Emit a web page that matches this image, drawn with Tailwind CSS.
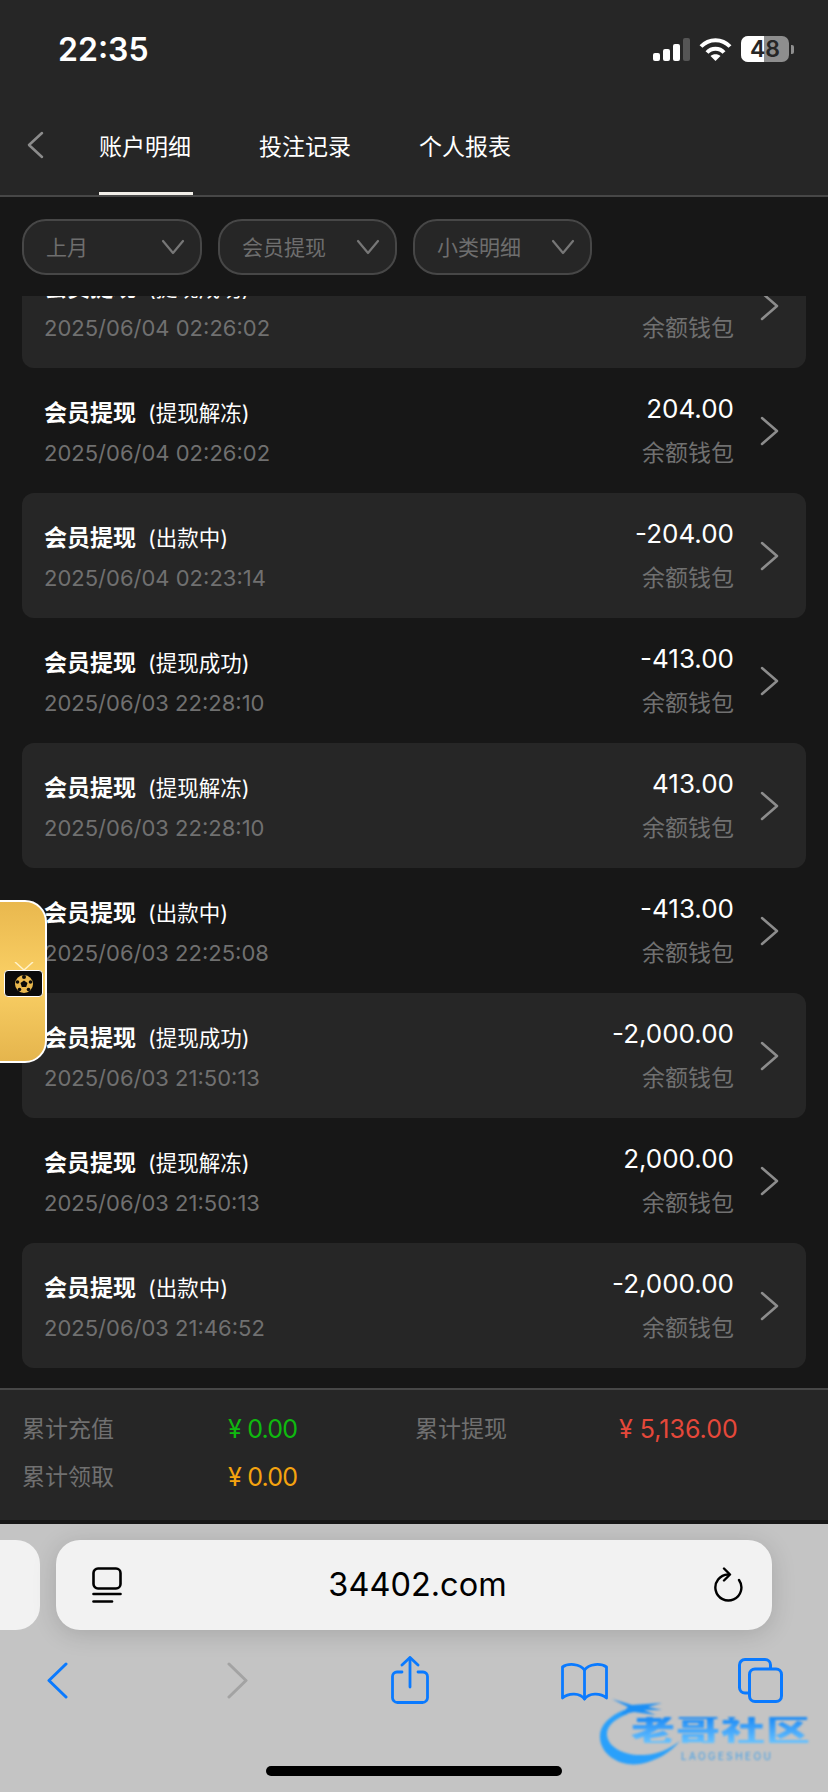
<!DOCTYPE html>
<html lang="zh-CN">
<head>
  <meta charset="UTF-8">
  <meta name="viewport" content="width=device-width, initial-scale=1.0">
  <title>账户明细</title>
  <script src="https://cdn.jsdelivr.net/npm/@tailwindcss/browser@4"></script>
</head>
<body class="bg-[#171717] font-['Inter','Noto_Sans_CJK_SC',sans-serif]">
  <div class="relative w-[828px] h-[1792px] overflow-hidden flex flex-col">

    <!-- status bar + tabs -->
    <header class="h-[197px] shrink-0 bg-[#262626] border-b-2 border-[#474747] flex flex-col">
      <div class="h-[100px] pl-[58px] pr-[34px] pt-[30px] flex items-start justify-between">
        <span class="text-[32px] leading-[40px] font-semibold text-white">22:35</span>
        <div class="flex items-center gap-[9px] pt-[6px]">
          <svg width="37" height="23" viewBox="0 0 37 23">
            <rect x="0" y="15" width="7" height="8" rx="2" fill="#fff"/>
            <rect x="10" y="11" width="7" height="12" rx="2" fill="#fff"/>
            <rect x="20" y="6" width="7" height="17" rx="2" fill="#fff"/>
            <rect x="30" y="0" width="7" height="23" rx="2" fill="#555"/>
          </svg>
          <svg width="33" height="24" viewBox="0 0 33 24" fill="none" stroke="#fff" stroke-width="4">
            <path d="M2 9.5C10 1 23 1 31 9.5"/>
            <path d="M8 15.500C12.500 10.500 20.500 10.500 25 15.500"/>
            <path d="M16.500 24L11.500 19C14 16.500 19 16.500 21.500 19Z" fill="#fff" stroke="none"/>
          </svg>
          <div class="flex items-center gap-[2px]">
            <div class="relative w-[48px] h-[26px] rounded-[7px] overflow-hidden bg-[#8e8e8e] flex items-center justify-center">
              <div class="absolute left-0 top-0 bottom-0 w-[23px] bg-white"></div>
              <span class="relative text-[23px] leading-[26px] font-semibold text-[#262626]">48</span>
            </div>
            <div class="w-[3px] h-[9px] rounded-r-[2px] bg-[#8e8e8e]"></div>
          </div>
        </div>
      </div>
      <nav class="flex-1 relative flex items-start pl-[26px]">
        <svg class="mt-[31px]" width="18" height="28" viewBox="0 0 18 28" fill="none" stroke="#8c8c8c" stroke-width="2.500" stroke-linecap="round" stroke-linejoin="round"><path d="M16 2L3 14L16 26"/></svg>
        <div class="flex gap-[68px] ml-[55px]">
          <a class="relative h-[95px] pt-[32px] text-[23px] leading-[30px] text-white">账户明细<span class="absolute left-0 -right-[2px] bottom-0 h-[3px] bg-[#f2efe9]"></span></a>
          <a class="pt-[32px] text-[23px] leading-[30px] text-white">投注记录</a>
          <a class="pt-[32px] text-[23px] leading-[30px] text-white">个人报表</a>
        </div>
      </nav>
    </header>

    <!-- filters -->
    <div class="h-[99px] shrink-0 bg-[#171717] pl-[22px] pt-[22px] flex items-start gap-[16px]">
      <div class="w-[180px] h-[56px] rounded-[24px] bg-[#262626] border-2 border-[#474747] pl-[22px] pr-[15px] flex items-center justify-between">
        <span class="pt-[2px] text-[21px] text-[#6e6e6e]">上月</span>
        <svg width="24" height="16" viewBox="0 0 24 16" fill="none" stroke="#777" stroke-width="2.200" stroke-linecap="round" stroke-linejoin="round"><path d="M2 2L12 14L22 2"/></svg>
      </div>
      <div class="w-[179px] h-[56px] rounded-[24px] bg-[#262626] border-2 border-[#474747] pl-[22px] pr-[15px] flex items-center justify-between">
        <span class="pt-[2px] text-[21px] text-[#6e6e6e]">会员提现</span>
        <svg width="24" height="16" viewBox="0 0 24 16" fill="none" stroke="#777" stroke-width="2.200" stroke-linecap="round" stroke-linejoin="round"><path d="M2 2L12 14L22 2"/></svg>
      </div>
      <div class="w-[179px] h-[56px] rounded-[24px] bg-[#262626] border-2 border-[#474747] pl-[22px] pr-[15px] flex items-center justify-between">
        <span class="pt-[2px] text-[21px] text-[#6e6e6e]">小类明细</span>
        <svg width="24" height="16" viewBox="0 0 24 16" fill="none" stroke="#777" stroke-width="2.200" stroke-linecap="round" stroke-linejoin="round"><path d="M2 2L12 14L22 2"/></svg>
      </div>
    </div>

    <!-- list, scrolled a little -->
    <main class="flex-1 overflow-hidden">
      <div class="mt-[-53px] flex flex-col px-[22px]">
        <div class="h-[125px] rounded-[12px] bg-[#262626] pl-[23px] pr-[27px] flex items-center">
          <div class="flex-1 pt-[5px] -ml-[1px]">
            <div class="flex items-center h-[30px]"><span class="text-[23px] font-bold text-white">会员提现</span><span class="ml-[12px] text-[21.500px] text-white">(提现成功)</span></div>
            <div class="mt-[10px] text-[22px] leading-[30px] text-[#707070]">2025/06/04 02:26:02</div>
          </div>
          <div class="text-right mr-[26px]">
            <div class="mb-[2px] text-[26px] leading-[30px] text-white">-204.00</div>
            <div class="mt-[14px] text-[23px] leading-[30px] text-[#707070]">余额钱包</div>
          </div>
          <svg width="19" height="30" viewBox="0 0 19 30" fill="none" stroke="#8c8c8c" stroke-width="2.500" stroke-linecap="round" stroke-linejoin="round"><path d="M2 2L17 15L2 28"/></svg>
        </div>
        <div class="h-[125px] rounded-[12px] pl-[23px] pr-[27px] flex items-center">
          <div class="flex-1 pt-[5px] -ml-[1px]">
            <div class="flex items-center h-[30px]"><span class="text-[23px] font-bold text-white">会员提现</span><span class="ml-[12px] text-[21.500px] text-white">(提现解冻)</span></div>
            <div class="mt-[10px] text-[22px] leading-[30px] text-[#707070]">2025/06/04 02:26:02</div>
          </div>
          <div class="text-right mr-[26px]">
            <div class="mb-[2px] text-[26px] leading-[30px] text-white">204.00</div>
            <div class="mt-[14px] text-[23px] leading-[30px] text-[#707070]">余额钱包</div>
          </div>
          <svg width="19" height="30" viewBox="0 0 19 30" fill="none" stroke="#8c8c8c" stroke-width="2.500" stroke-linecap="round" stroke-linejoin="round"><path d="M2 2L17 15L2 28"/></svg>
        </div>
        <div class="h-[125px] rounded-[12px] bg-[#262626] pl-[23px] pr-[27px] flex items-center">
          <div class="flex-1 pt-[5px] -ml-[1px]">
            <div class="flex items-center h-[30px]"><span class="text-[23px] font-bold text-white">会员提现</span><span class="ml-[12px] text-[21.500px] text-white">(出款中)</span></div>
            <div class="mt-[10px] text-[22px] leading-[30px] text-[#707070]">2025/06/04 02:23:14</div>
          </div>
          <div class="text-right mr-[26px]">
            <div class="mb-[2px] text-[26px] leading-[30px] text-white">-204.00</div>
            <div class="mt-[14px] text-[23px] leading-[30px] text-[#707070]">余额钱包</div>
          </div>
          <svg width="19" height="30" viewBox="0 0 19 30" fill="none" stroke="#8c8c8c" stroke-width="2.500" stroke-linecap="round" stroke-linejoin="round"><path d="M2 2L17 15L2 28"/></svg>
        </div>
        <div class="h-[125px] rounded-[12px] pl-[23px] pr-[27px] flex items-center">
          <div class="flex-1 pt-[5px] -ml-[1px]">
            <div class="flex items-center h-[30px]"><span class="text-[23px] font-bold text-white">会员提现</span><span class="ml-[12px] text-[21.500px] text-white">(提现成功)</span></div>
            <div class="mt-[10px] text-[22px] leading-[30px] text-[#707070]">2025/06/03 22:28:10</div>
          </div>
          <div class="text-right mr-[26px]">
            <div class="mb-[2px] text-[26px] leading-[30px] text-white">-413.00</div>
            <div class="mt-[14px] text-[23px] leading-[30px] text-[#707070]">余额钱包</div>
          </div>
          <svg width="19" height="30" viewBox="0 0 19 30" fill="none" stroke="#8c8c8c" stroke-width="2.500" stroke-linecap="round" stroke-linejoin="round"><path d="M2 2L17 15L2 28"/></svg>
        </div>
        <div class="h-[125px] rounded-[12px] bg-[#262626] pl-[23px] pr-[27px] flex items-center">
          <div class="flex-1 pt-[5px] -ml-[1px]">
            <div class="flex items-center h-[30px]"><span class="text-[23px] font-bold text-white">会员提现</span><span class="ml-[12px] text-[21.500px] text-white">(提现解冻)</span></div>
            <div class="mt-[10px] text-[22px] leading-[30px] text-[#707070]">2025/06/03 22:28:10</div>
          </div>
          <div class="text-right mr-[26px]">
            <div class="mb-[2px] text-[26px] leading-[30px] text-white">413.00</div>
            <div class="mt-[14px] text-[23px] leading-[30px] text-[#707070]">余额钱包</div>
          </div>
          <svg width="19" height="30" viewBox="0 0 19 30" fill="none" stroke="#8c8c8c" stroke-width="2.500" stroke-linecap="round" stroke-linejoin="round"><path d="M2 2L17 15L2 28"/></svg>
        </div>
        <div class="h-[125px] rounded-[12px] pl-[23px] pr-[27px] flex items-center">
          <div class="flex-1 pt-[5px] -ml-[1px]">
            <div class="flex items-center h-[30px]"><span class="text-[23px] font-bold text-white">会员提现</span><span class="ml-[12px] text-[21.500px] text-white">(出款中)</span></div>
            <div class="mt-[10px] text-[22px] leading-[30px] text-[#707070]">2025/06/03 22:25:08</div>
          </div>
          <div class="text-right mr-[26px]">
            <div class="mb-[2px] text-[26px] leading-[30px] text-white">-413.00</div>
            <div class="mt-[14px] text-[23px] leading-[30px] text-[#707070]">余额钱包</div>
          </div>
          <svg width="19" height="30" viewBox="0 0 19 30" fill="none" stroke="#8c8c8c" stroke-width="2.500" stroke-linecap="round" stroke-linejoin="round"><path d="M2 2L17 15L2 28"/></svg>
        </div>
        <div class="h-[125px] rounded-[12px] bg-[#262626] pl-[23px] pr-[27px] flex items-center">
          <div class="flex-1 pt-[5px] -ml-[1px]">
            <div class="flex items-center h-[30px]"><span class="text-[23px] font-bold text-white">会员提现</span><span class="ml-[12px] text-[21.500px] text-white">(提现成功)</span></div>
            <div class="mt-[10px] text-[22px] leading-[30px] text-[#707070]">2025/06/03 21:50:13</div>
          </div>
          <div class="text-right mr-[26px]">
            <div class="mb-[2px] text-[26px] leading-[30px] text-white">-2,000.00</div>
            <div class="mt-[14px] text-[23px] leading-[30px] text-[#707070]">余额钱包</div>
          </div>
          <svg width="19" height="30" viewBox="0 0 19 30" fill="none" stroke="#8c8c8c" stroke-width="2.500" stroke-linecap="round" stroke-linejoin="round"><path d="M2 2L17 15L2 28"/></svg>
        </div>
        <div class="h-[125px] rounded-[12px] pl-[23px] pr-[27px] flex items-center">
          <div class="flex-1 pt-[5px] -ml-[1px]">
            <div class="flex items-center h-[30px]"><span class="text-[23px] font-bold text-white">会员提现</span><span class="ml-[12px] text-[21.500px] text-white">(提现解冻)</span></div>
            <div class="mt-[10px] text-[22px] leading-[30px] text-[#707070]">2025/06/03 21:50:13</div>
          </div>
          <div class="text-right mr-[26px]">
            <div class="mb-[2px] text-[26px] leading-[30px] text-white">2,000.00</div>
            <div class="mt-[14px] text-[23px] leading-[30px] text-[#707070]">余额钱包</div>
          </div>
          <svg width="19" height="30" viewBox="0 0 19 30" fill="none" stroke="#8c8c8c" stroke-width="2.500" stroke-linecap="round" stroke-linejoin="round"><path d="M2 2L17 15L2 28"/></svg>
        </div>
        <div class="h-[125px] rounded-[12px] bg-[#262626] pl-[23px] pr-[27px] flex items-center">
          <div class="flex-1 pt-[5px] -ml-[1px]">
            <div class="flex items-center h-[30px]"><span class="text-[23px] font-bold text-white">会员提现</span><span class="ml-[12px] text-[21.500px] text-white">(出款中)</span></div>
            <div class="mt-[10px] text-[22px] leading-[30px] text-[#707070]">2025/06/03 21:46:52</div>
          </div>
          <div class="text-right mr-[26px]">
            <div class="mb-[2px] text-[26px] leading-[30px] text-white">-2,000.00</div>
            <div class="mt-[14px] text-[23px] leading-[30px] text-[#707070]">余额钱包</div>
          </div>
          <svg width="19" height="30" viewBox="0 0 19 30" fill="none" stroke="#8c8c8c" stroke-width="2.500" stroke-linecap="round" stroke-linejoin="round"><path d="M2 2L17 15L2 28"/></svg>
        </div>
      </div>
    </main>

    <!-- totals -->
    <section class="h-[132px] shrink-0 bg-[#262626] border-t-2 border-[#474747] pl-[22px] pt-[15px]">
      <div class="grid grid-cols-[206px_187px_204px_1fr] grid-rows-[48px_48px] items-center text-[23px] leading-[30px]">
        <span class="text-[#707070]">累计充值</span>
        <span class="text-[25px] tracking-[-0.8px] text-[#0fb90f]">¥ 0.00</span>
        <span class="text-[#707070]">累计提现</span>
        <span class="text-[25px] text-[#e5483a]">¥ 5,136.00</span>
        <span class="text-[#707070]">累计领取</span>
        <span class="text-[25px] tracking-[-0.8px] text-[#f5a30f]">¥ 0.00</span>
      </div>
    </section>
    <div class="h-[4px] shrink-0 bg-[#171717]"></div>

    <!-- safari chrome -->
    <footer class="h-[268px] shrink-0 bg-[#c4c4c4] relative">
      <div class="pt-[16px] flex gap-[16px] ml-[-200px]">
        <div class="w-[240px] h-[90px] shrink-0 rounded-[24px] bg-[#f2f2f2]"></div>
        <div class="w-[716px] h-[90px] shrink-0 rounded-[24px] bg-[#f2f2f2] shadow-[0_4px_24px_rgba(0,0,0,0.15)] pl-[36px] pr-[29px] flex items-center justify-between">
          <svg width="30" height="36" viewBox="0 0 30 36" fill="none" stroke="#000" stroke-width="2.600" stroke-linecap="round">
            <rect x="1.500" y="1.500" width="27" height="20" rx="4.500"/>
            <path d="M1.500 27H28.500"/>
            <path d="M1.500 34.500H20"/>
          </svg>
          <span class="text-[32.500px] leading-[40px] text-black">34402.com</span>
          <svg width="30" height="36" viewBox="0 0 30 36" fill="none" stroke="#000" stroke-width="2.400" stroke-linecap="round" stroke-linejoin="round">
            <path d="M15 7.500A13 13 0 1 0 26 13"/>
            <path d="M11 1.500L17 7.500L11 13.500"/>
          </svg>
        </div>
      </div>
      <div class="absolute left-0 right-0 top-[132px]">
        <div class="relative h-[50px]">
          <svg class="absolute left-[47px] top-[6px]" width="21" height="37" viewBox="0 0 21 37" fill="none" stroke="#0a7aff" stroke-width="3" stroke-linecap="round" stroke-linejoin="round"><path d="M19 2L2 18.500L19 35"/></svg>
          <svg class="absolute left-[227px] top-[6px]" width="21" height="37" viewBox="0 0 21 37" fill="none" stroke="#a3a3a3" stroke-width="3" stroke-linecap="round" stroke-linejoin="round"><path d="M2 2L19 18.500L2 35"/></svg>
          <svg class="absolute left-[391px] top-0" width="38" height="48" viewBox="0 0 38 48" fill="none" stroke="#0a7aff" stroke-width="2.800" stroke-linecap="round" stroke-linejoin="round">
            <path d="M19 31V2"/><path d="M11 9L19 1.500L27 9"/>
            <path d="M11 16H6A4.500 4.500 0 0 0 1.500 20.500V41A5 5 0 0 0 6.500 46.500H31.500A5 5 0 0 0 36.500 41V20.500A4.500 4.500 0 0 0 32 16H27"/>
          </svg>
          <svg class="absolute left-[561px] top-[6px]" width="47" height="39" viewBox="0 0 47 39" fill="none" stroke="#0a7aff" stroke-width="2.800" stroke-linecap="round" stroke-linejoin="round">
            <path d="M23.500 8C19 1.500 7 1 1.500 5V36C8 30.500 19 31 23.500 37C28 31 39 30.500 45.500 36V5C40 1 28 1.500 23.500 8Z"/>
            <path d="M23.500 8V37"/>
          </svg>
          <svg class="absolute left-[738px] top-[2px]" width="45" height="45" viewBox="0 0 45 45" fill="none" stroke="#0a7aff" stroke-width="3" stroke-linejoin="round">
            <path d="M11 35H7A5.500 5.500 0 0 1 1.500 29.500V7A5.500 5.500 0 0 1 7 1.500H27A5.500 5.500 0 0 1 32.500 7V11"/>
            <rect x="11.500" y="11" width="32" height="32.500" rx="5.500"/>
          </svg>
        </div>
      </div>
      <div class="absolute left-[266px] top-[242px] w-[296px] h-[10px] rounded-full bg-black"></div>
    </footer>

    <!-- floating promo tab -->
    <div class="absolute left-[-3px] top-[900px] w-[50px] h-[163px] rounded-r-[22px] border-2 border-white bg-gradient-to-b from-[#e9b84e] via-[#fad065] to-[#e5b54d] flex items-center justify-center">
      <div class="mt-[-4px] ml-[3px] flex flex-col items-center">
        <svg width="26" height="8" viewBox="0 0 26 8" fill="none" stroke="#fff2c9" stroke-width="1.500"><path d="M13 8L4 0"/><path d="M13 8L22 0"/></svg>
        <div class="w-[39px] h-[27px] rounded-[4px] bg-[#0b0b0b] border border-white flex items-center justify-center">
          <svg width="20" height="20" viewBox="0 0 20 20">
            <circle cx="10" cy="10" r="9" fill="#e9b84e"/>
            <path d="M10 6.500L13.500 9L12.200 13H7.800L6.500 9Z" fill="#0b0b0b"/>
            <circle cx="10" cy="3" r="2" fill="#0b0b0b"/>
            <circle cx="3.500" cy="8" r="1.800" fill="#0b0b0b"/>
            <circle cx="16.500" cy="8" r="1.800" fill="#0b0b0b"/>
            <circle cx="5.500" cy="15.500" r="1.800" fill="#0b0b0b"/>
            <circle cx="14.500" cy="15.500" r="1.800" fill="#0b0b0b"/>
          </svg>
        </div>
      </div>
    </div>

    <!-- watermark -->
    <div class="absolute left-[590px] top-[1695px] w-[238px] h-[80px] blur-[0.8px] pointer-events-none">
      <svg class="absolute left-0 top-0" width="90" height="80" viewBox="0 0 90 80">
        <path d="M34 15C20 21 9 30 10 43C11 60 30 72 50 69C66 66 80 58 90 46C78 55 64 61 50 60C33 60 18 52 17 40C16 31 26 23 38 19Z" fill="#29a0fb"/>
        <path d="M22 4L42 10L72 8L58 12L72 15L54 15L66 20L44 17L30 20L38 12Z" fill="#1b8ff5"/>
      </svg>
      <div class="absolute left-[41px] top-[17px] w-[180px] h-[36px] text-center text-[44px] leading-[36px] font-black whitespace-nowrap tracking-[1px] scale-y-[0.72] bg-gradient-to-b from-[#1689f5] to-[#66c2ff] bg-clip-text text-transparent">老哥社区</div>
      <div class="absolute left-[91px] top-[55px] text-[10px] leading-[12px] tracking-[2.400px] text-[#3f9ee8]">LAOGESHEOU</div>
    </div>
  </div>
</body>
</html>
